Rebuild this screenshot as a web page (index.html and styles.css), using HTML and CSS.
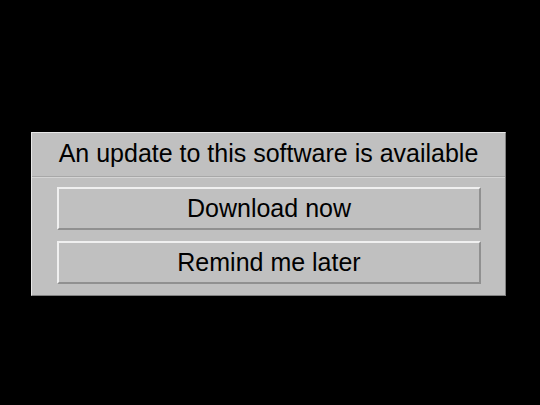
FILE: index.html
```html
<!DOCTYPE html>
<html lang="en">
<head>
    <meta charset="UTF-8">
    <title>Update available</title>
    <link rel="stylesheet" href="styles.css">
</head>
<body>
    <div class="dialog">
        <div class="dialog-title">An update to this software is available</div>
        <div class="dialog-actions">
            <button class="btn">Download now</button>
            <button class="btn">Remind me later</button>
        </div>
    </div>
</body>
</html>
```
FILE: styles.css
```css
body {
    background-color: #000000;
    margin: 0;
    padding: 132px 0 0 31px;
    font-family: 'Liberation Sans', Arial, sans-serif;
}

.dialog {
    width: 475px;
    box-sizing: border-box;
    background-color: #c0c0c0;
    border-top: 1px solid #e8e8e8;
    border-left: 1px solid #e8e8e8;
    border-right: 1px solid #808080;
    border-bottom: 1px solid #808080;
}

.dialog-title {
    height: 43px;
    line-height: 40px;
    text-align: center;
    font-size: 25px;
    color: #000000;
    border-bottom: 1px solid #a8a8a8;
    box-shadow: 0 1px 0 #d4d4d4;
}

.dialog-actions {
    display: flex;
    flex-direction: column;
    gap: 11px;
    padding: 10px 24px 11px 25px;
}

.btn {
    height: 43px;
    background-color: #c0c0c0;
    border-top: 2px solid #f0f0f0;
    border-left: 2px solid #f0f0f0;
    border-right: 2px solid #909090;
    border-bottom: 2px solid #909090;
    font-family: 'Liberation Sans', Arial, sans-serif;
    font-size: 25px;
    color: #000000;
    padding: 0;
}
```
